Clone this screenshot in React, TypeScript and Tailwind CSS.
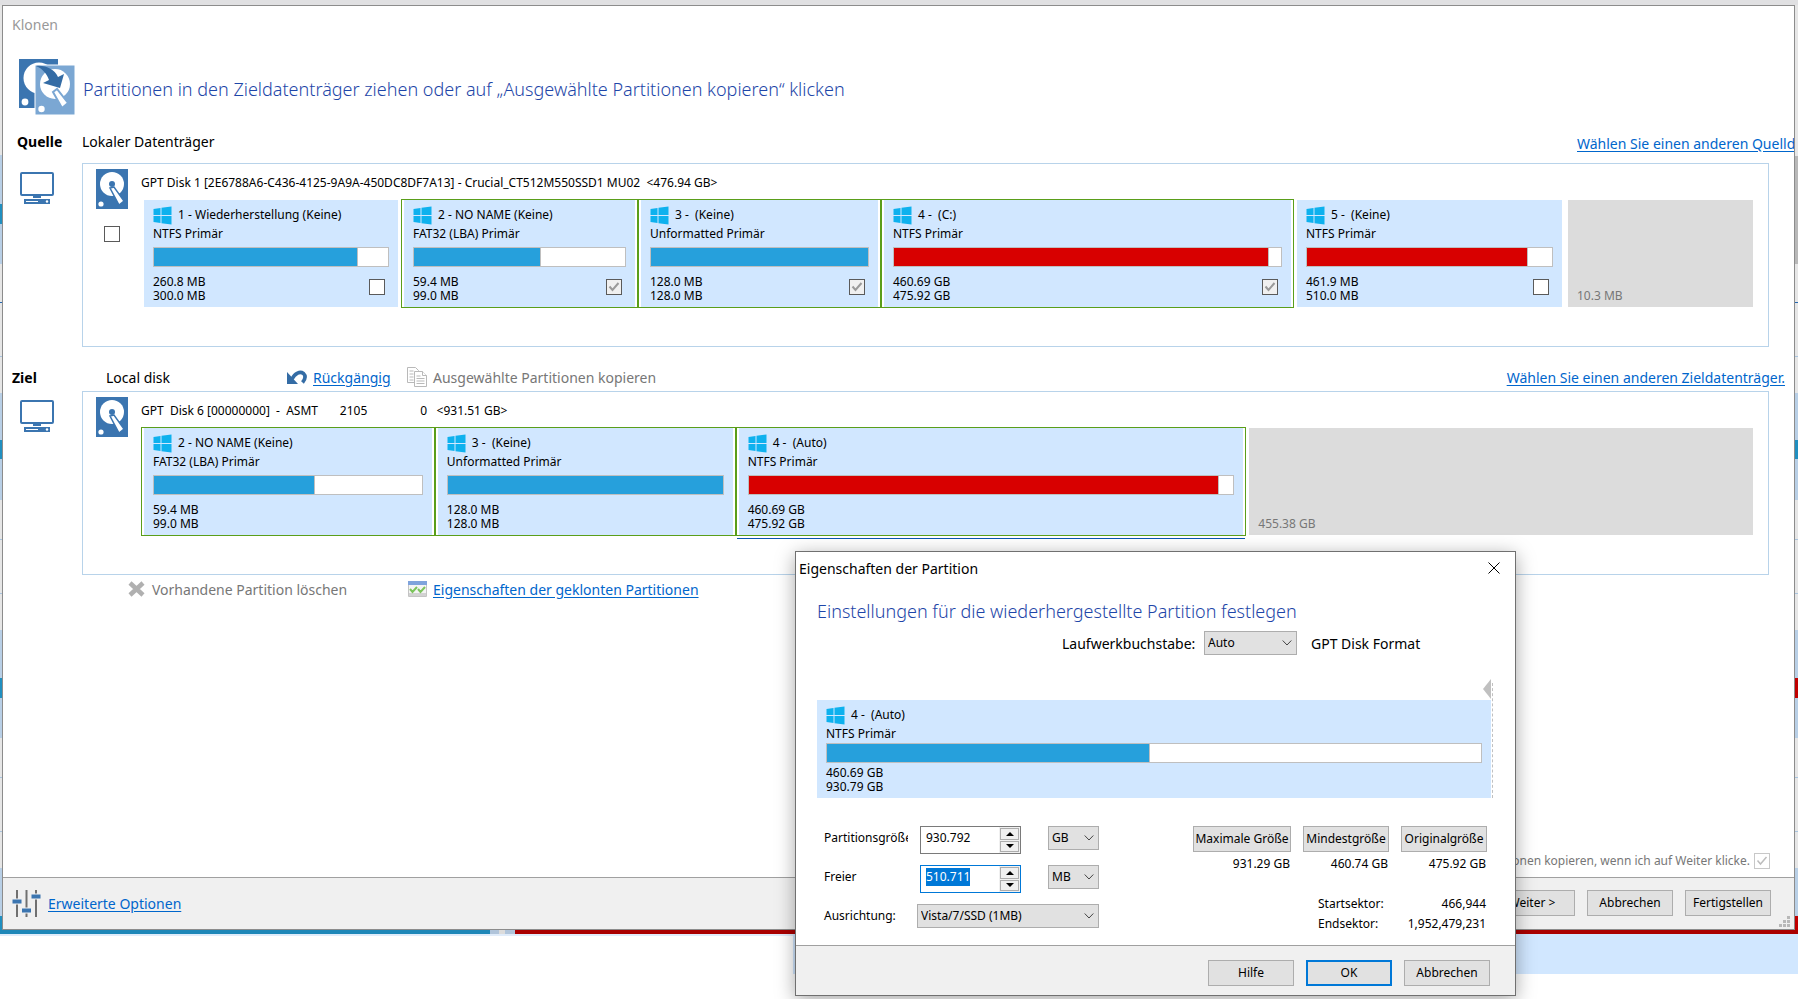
import { useEffect, useRef } from 'react';
import type { ReactNode } from 'react';
import clsx from 'clsx';

interface Partition {
  checkbox?: 'open' | 'locked';
  color?: 'blue' | 'red';
  free?: boolean;
  fs?: string;
  name?: string;
  percent?: number;
  selected?: boolean;
  size: string;
  underline?: boolean;
  used?: string;
  weight: number;
}

const SOURCE_PARTITIONS: Partition[] = [
  { name: '1 - Wiederherstellung (Keine)', fs: 'NTFS Primär', used: '260.8 MB', size: '300.0 MB', percent: 87, color: 'blue', checkbox: 'open', weight: 260 },
  { name: '2 - NO NAME (Keine)', fs: 'FAT32 (LBA) Primär', used: '59.4 MB', size: '99.0 MB', percent: 60, color: 'blue', checkbox: 'locked', selected: true, weight: 237 },
  { name: '3 -  (Keine)', fs: 'Unformatted Primär', used: '128.0 MB', size: '128.0 MB', percent: 100, color: 'blue', checkbox: 'locked', selected: true, weight: 243 },
  { name: '4 -  (C:)', fs: 'NTFS Primär', used: '460.69 GB', size: '475.92 GB', percent: 97, color: 'red', checkbox: 'locked', selected: true, weight: 413 },
  { name: '5 -  (Keine)', fs: 'NTFS Primär', used: '461.9 MB', size: '510.0 MB', percent: 90, color: 'red', checkbox: 'open', weight: 271 },
  { free: true, size: '10.3 MB', weight: 191 },
];

const TARGET_PARTITIONS: Partition[] = [
  { name: '2 - NO NAME (Keine)', fs: 'FAT32 (LBA) Primär', used: '59.4 MB', size: '99.0 MB', percent: 60, color: 'blue', selected: true, weight: 294 },
  { name: '3 -  (Keine)', fs: 'Unformatted Primär', used: '128.0 MB', size: '128.0 MB', percent: 100, color: 'blue', selected: true, weight: 301 },
  { name: '4 -  (Auto)', fs: 'NTFS Primär', used: '460.69 GB', size: '475.92 GB', percent: 97, color: 'red', selected: true, underline: true, weight: 511 },
  { free: true, size: '455.38 GB', weight: 510 },
];

const small = "font-['Noto_Sans','Open_Sans',sans-serif] text-[12px]";

function WindowsIcon() {
  return (
    <svg className="w-[19px] h-[19px] shrink-0" viewBox="0 0 19 19" fill="#0eb1ee">
      <path d="M0.5 3 7.5 2v7H0.5zM8.5 1.8 18.5 0.4V9h-10zM0.5 10h7v7l-7-1zM8.5 10h10v8.6l-10-1.4z" />
    </svg>
  );
}

function DiskIcon() {
  return (
    <svg className="w-8 h-10" viewBox="0 0 32 40">
      <path d="M0 0h32v40H0z" fill="#3b75b0" />
      <circle cx="16" cy="15" r="12" fill="#fff" />
      <circle cx="16" cy="15" r="3" fill="#3b75b0" />
      <path d="m14 19 4-1 10 14-5 4z" fill="#fff" stroke="#3b75b0" strokeWidth="1.5" />
      <circle cx="5" cy="35" r="2.6" fill="#fff" />
    </svg>
  );
}

function CloneIcon() {
  return (
    <svg className="w-14 h-14" viewBox="0 0 56 56">
      <path d="M0 0h39v49H0z" fill="#3b75b0" />
      <circle cx="20" cy="19" r="15.5" fill="#fff" />
      <circle cx="6" cy="43" r="3.4" fill="#fff" />
      <path d="M16 6h40v50H16z" fill="#7ba7d3" stroke="#fff" strokeWidth="1" />
      <circle cx="36" cy="25" r="15" fill="#fff" />
      <path d="m34 33 4-3 11 14-6 5z" fill="#fff" stroke="#7ba7d3" strokeWidth="2" />
      <circle cx="22.5" cy="50" r="3.2" fill="#fff" />
      <path d="M17 7c10-1 18 3 22 11l6-3-4 14-17-5 6-3c-2-6-6-11-13-14z" fill="#346ca5" />
    </svg>
  );
}

function MonitorIcon() {
  return (
    <svg className="w-[34px] h-8" viewBox="0 0 34 32">
      <rect x="1" y="1" width="32" height="22" rx="1" fill="#fff" stroke="#3b75b0" strokeWidth="2" />
      <path d="M13 24h8v2h-8z" fill="#3b75b0" />
      <path d="M4 27h26v5H4z" fill="#3b75b0" />
      <path d="M6 29.5h12" stroke="#fff" />
      <circle cx="27" cy="29.5" r="1.2" fill="#fff" />
    </svg>
  );
}

function UndoIcon() {
  return (
    <svg className="w-5 h-[18px]" viewBox="0 0 20 18" fill="none">
      <path d="M5 11C8 5 13 3 16.500 5.500c2.500 2.500 1.500 6-1 9" stroke="#346ca5" strokeWidth="3.600" />
      <path d="M0 4v12h11z" fill="#346ca5" />
    </svg>
  );
}

function CopyIcon() {
  return (
    <svg className="w-5 h-5" viewBox="0 0 20 20" fill="#fff" stroke="#b9b9b9">
      <path d="M.5.5h8l3 3v12H.5z" />
      <path d="M2.5 4h4m-4 3h4m-4 3h4m-4 3h4" />
      <path d="M7.5 4.5h8l4 4v11h-12z" />
      <path d="M15.5 4.5v4h4M9.5 9h4m-4 2.5h8m-8 2.5h8m-8 2.5h8" />
    </svg>
  );
}

function DeleteIcon() {
  return (
    <svg className="w-[17px] h-4" viewBox="0 0 17 16">
      <path d="m2 2 13 12M15 2 2 14" stroke="#b0b0b0" strokeWidth="4.5" />
    </svg>
  );
}

function PropertiesIcon() {
  return (
    <svg className="w-[19px] h-4" viewBox="0 0 19 16">
      <path d="M.5.5h18v15H.5z" fill="#f4f4f4" stroke="#c4c4c4" />
      <path d="M0 0h19v4H0z" fill="#7fa3dc" />
      <path d="M1 12h17v3H1z" fill="#d2d2d2" />
      <path d="m2 8 2.5 3L9 6m1 2 2.5 3L17 6" fill="none" stroke="#7cc45c" strokeWidth="2" />
    </svg>
  );
}

function SlidersIcon() {
  return (
    <svg className="w-[29px] h-[27px]" viewBox="0 0 29 27">
      <path d="M5 0v27M14.5 0v27M24 0v27" stroke="#707070" strokeWidth="2" />
      <path d="M0 9h10v5H0zM9.5 18h10v5h-10zM19 4h10v5H19z" fill="#3b75b0" stroke="#efefef" />
    </svg>
  );
}

function Check({ id, label, locked, faint }: { id: string; label?: string; locked?: boolean; faint?: boolean }) {
  return (
    <span className="relative block w-4 h-4 shrink-0">
      <input
        aria-label={label}
        className={clsx(
          'block appearance-none w-4 h-4 border',
          faint ? 'border-[#c8c8c8] bg-white' : 'border-[#5a5a5a]',
          !faint && (locked ? 'bg-[#f0f0f0]' : 'bg-white'),
        )}
        defaultChecked={locked}
        disabled={locked}
        id={id}
        type="checkbox"
      />
      {locked && (
        <svg className="absolute inset-0 w-4 h-4 pointer-events-none" viewBox="0 0 16 16" fill="none">
          <path d="m3.5 7.5 3 3.5 6-7" stroke={faint ? '#bdbdbd' : '#9a9a9a'} strokeWidth={faint ? 1.5 : 2} />
        </svg>
      )}
    </span>
  );
}

function UsageBar({ percent, color }: { percent: number; color: 'blue' | 'red' }) {
  return (
    <div className="h-5 bg-white border border-[#bfbfbf]">
      <div
        className={clsx('h-full', color === 'red' ? 'bg-[#d80000]' : 'bg-[#26a0dc]', percent < 100 && 'border-r border-[#bfbfbf]')}
        style={{ width: `${percent}%` }}
      />
    </div>
  );
}

function PartitionTitle({ name, fs }: { name?: string; fs?: string }) {
  return (
    <>
      <div className="flex items-center gap-1.5 h-[19px] whitespace-pre">
        <WindowsIcon />
        <span className="pb-0.5">{name}</span>
      </div>
      <div className="leading-[18px]">{fs}</div>
    </>
  );
}

function PartitionCell({ partition, id }: { partition: Partition; id: string }) {
  const p = partition;
  return (
    <div className={clsx('relative h-[109px] border px-0.5', p.selected ? 'border-[#5a9e1a]' : 'border-transparent')}>
      {p.free ? (
        <div className="flex h-full items-end bg-[#dcdcdc] px-[9px] pb-1 leading-[14px] text-[#777]">{p.size}</div>
      ) : (
        <div className="h-full bg-[#d1e7ff] px-[9px] pt-1.5">
          <PartitionTitle name={p.name} fs={p.fs} />
          <div className="mt-1">
            <UsageBar percent={p.percent ?? 0} color={p.color ?? 'blue'} />
          </div>
          <div className="mt-2 flex items-start justify-between pr-1 leading-[14px]">
            <div>
              <div>{p.used}</div>
              <div>{p.size}</div>
            </div>
            {p.checkbox && (
              <div className="pt-1">
                <Check id={id} label={p.name} locked={p.checkbox === 'locked'} />
              </div>
            )}
          </div>
        </div>
      )}
      {p.underline && <div className="absolute -bottom-1 left-0 right-0 h-px bg-[#0a54b0]" />}
    </div>
  );
}

function DiskPanel({ id, title, partitions, selectable }: { id: string; title: string; partitions: Partition[]; selectable?: boolean }) {
  const columns = partitions.map((p) => `minmax(0, ${p.weight}fr)`).join(' ');

  return (
    <div className="flex">
      <div className="w-[79px] shrink-0 pl-[17px] pt-[9px]">
        <MonitorIcon />
      </div>
      <div className={clsx('mr-[25px] flex h-[184px] min-w-0 flex-1 border border-[#b8d3ea] pl-[13px] pr-3', small)}>
        <div className="flex w-8 shrink-0 flex-col items-center gap-[17px] pt-[5px]">
          <DiskIcon />
          {selectable && <Check id={`${id}-all`} label={title} />}
        </div>
        <div className="ml-[13px] min-w-0 flex-1">
          <div className="flex h-[35px] items-center pt-0.5 whitespace-pre">{title}</div>
          <div className="grid" style={{ gridTemplateColumns: columns }}>
            {partitions.map((p, i) => (
              <PartitionCell key={p.size + i} id={`${id}-${i}`} partition={p} />
            ))}
          </div>
        </div>
      </div>
    </div>
  );
}

function Link({ children }: { children: ReactNode }) {
  return (
    <a className="whitespace-nowrap text-[#0066cc] underline underline-offset-2" href="#">
      {children}
    </a>
  );
}

function PushButton({ children, primary, fit }: { children: ReactNode; primary?: boolean; fit?: boolean }) {
  return (
    <button
      className={clsx(
        'h-[26px] bg-[#e1e1e1] whitespace-nowrap text-black',
        small,
        fit ? 'w-[98px]' : 'w-[86px]',
        primary ? 'border-2 border-[#0078d7]' : 'border border-[#adadad]',
      )}
      type="button"
    >
      {children}
    </button>
  );
}

function Select({ id, value, label, className }: { id: string; value: string; label?: string; className: string }) {
  return (
    <span className={clsx('relative block h-6', className)}>
      <select
        aria-label={label}
        className={clsx('block h-full w-full appearance-none border border-[#adadad] bg-[#e1e1e1] pl-[3px] text-black', small)}
        id={id}
        defaultValue={value}
      >
        <option>{value}</option>
      </select>
      <svg className="pointer-events-none absolute right-[5px] top-2 h-2 w-[10px]" viewBox="0 0 10 8" fill="none">
        <path d="m.7 1.5 4.3 4.5 4.3-4.5" stroke="#444" />
      </svg>
    </span>
  );
}

function SpinBox({ id, value, focused }: { id: string; value: string; focused?: boolean }) {
  const ref = useRef<HTMLInputElement>(null);

  useEffect(() => {
    if (!focused) return;
    ref.current?.focus();
    ref.current?.select();
  }, [focused]);

  return (
    <span className={clsx('flex h-7 w-[101px] border bg-white', focused ? 'border-[#0078d7]' : 'border-[#7a7a7a]')}>
      <input
        ref={ref}
        className={clsx('min-w-0 flex-1 pl-[5px] pb-1 outline-none selection:bg-[#0078d7] selection:text-white', small)}
        defaultValue={value}
        id={id}
        type="text"
      />
      <span className="flex w-[21px] flex-col gap-px bg-[#f0f0f0] p-px">
        <button aria-label="Erhöhen" className="flex flex-1 items-center justify-center border border-[#adadad] bg-[#f0f0f0]" type="button">
          <svg className="h-1 w-2" viewBox="0 0 8 4"><path d="m0 4 4-4 4 4z" /></svg>
        </button>
        <button aria-label="Verringern" className="flex flex-1 items-center justify-center border border-[#adadad] bg-[#f0f0f0]" type="button">
          <svg className="h-1 w-2" viewBox="0 0 8 4"><path d="m0 0 4 4 4-4z" /></svg>
        </button>
      </span>
    </span>
  );
}

function SizePreset({ label, value, fit }: { label: string; value: string; fit?: boolean }) {
  return (
    <div className="text-right">
      <PushButton fit={fit}>{label}</PushButton>
      <div className="mt-1 pr-px leading-4">{value}</div>
    </div>
  );
}

function PartitionDialog() {
  return (
    <div
      aria-label="Eigenschaften der Partition"
      className="absolute left-[795px] top-[551px] flex h-[445px] w-[721px] flex-col border border-[#707070] bg-white shadow-[0_4px_18px_rgba(0,0,0,0.35)]"
      role="dialog"
    >
      <div className="flex h-8 items-center justify-between pl-[3px] pr-[15px]">
        <span className="text-[14px]">Eigenschaften der Partition</span>
        <button aria-label="Schließen" className="h-3 w-3" type="button">
          <svg className="h-3 w-3" viewBox="0 0 12 12"><path d="m.5.5 11 11m0-11-11 11" stroke="#000" /></svg>
        </button>
      </div>
      <h2 className="mt-[11px] pl-[21px] text-[18px] leading-8 font-light text-[#1e46a8]">
        Einstellungen für die wiederhergestellte Partition festlegen
      </h2>
      <div className="mt-1 flex h-6 items-center pl-[266px] text-[14px]">
        <label className="w-[142px] whitespace-nowrap" htmlFor="drive-letter">Laufwerkbuchstabe:</label>
        <Select className="w-[93px]" id="drive-letter" value="Auto" />
        <span className="ml-3.5">GPT Disk Format</span>
      </div>
      <div className={clsx('mt-6 flex pl-[21px] pr-[22px]', small)}>
        <div className="flex-1">
          <svg className="ml-auto block h-[21px] w-2" viewBox="0 0 8 21"><path d="M8 0v20L0 10z" fill="#c0c0c0" /></svg>
          <div className="h-[98px] bg-[#d1e7ff] px-[9px] pt-1.5">
            <PartitionTitle name="4 -  (Auto)" fs="NTFS Primär" />
            <UsageBar percent={49.4} color="blue" />
            <div className="mt-[3px] leading-[14px]">460.69 GB</div>
            <div className="leading-[14px]">930.79 GB</div>
          </div>
        </div>
        <div className="ml-px mt-1 border-l border-dashed border-[#c0c0c0]" />
      </div>
      <div className={clsx('flex flex-1 justify-between px-7 pt-7', small)}>
        <div className="grid auto-rows-min grid-cols-[84px_140px_51px] items-center gap-y-[11px]">
          <label className="overflow-hidden whitespace-nowrap pb-1" htmlFor="partition-size">Partitionsgröße</label>
          <div className="pl-3"><SpinBox id="partition-size" value="930.792" /></div>
          <Select className="w-[51px] self-start" id="size-unit" label="Einheit der Größe" value="GB" />
          <label className="pb-1" htmlFor="free-space">Freier</label>
          <div className="pl-3"><SpinBox focused id="free-space" value="510.711" /></div>
          <Select className="w-[51px] self-start" id="free-unit" label="Einheit des freien Speichers" value="MB" />
          <label htmlFor="alignment">Ausrichtung:</label>
          <div className="col-span-2 pl-[9px]"><Select className="w-full" id="alignment" value="Vista/7/SSD (1MB)" /></div>
        </div>
        <div>
          <div className="flex gap-3">
            <SizePreset fit label="Maximale Größe" value="931.29 GB" />
            <SizePreset label="Mindestgröße" value="460.74 GB" />
            <SizePreset label="Originalgröße" value="475.92 GB" />
          </div>
          <dl className="ml-auto mt-[22px] grid w-[169px] grid-cols-[auto_auto] justify-between pr-px leading-5">
            <dt>Startsektor:</dt>
            <dd className="text-right">466,944</dd>
            <dt>Endsektor:</dt>
            <dd className="text-right">1,952,479,231</dd>
          </dl>
        </div>
      </div>
      <div className="flex h-[50px] items-center justify-end gap-3 border-t border-[#a0a0a0] bg-[#f0f0f0] pr-[25px] pt-1">
        <PushButton>Hilfe</PushButton>
        <PushButton primary>OK</PushButton>
        <PushButton>Abbrechen</PushButton>
      </div>
    </div>
  );
}

// Slice of the program window that shows beside the clone wizard
function BackdropEdge({ side }: { side: 'left' | 'right' }) {
  const left = side === 'left';
  return (
    <div className={clsx('flex shrink-0 flex-col overflow-hidden bg-[#e6e6e6]', left ? 'w-0.5' : 'w-[3px]')}>
      <div className={clsx('h-[151px]', left && 'border-b border-[#b8cfe6]')} />
      <div className={clsx('h-12', left ? 'bg-[#b8cfe6]' : 'bg-[#b8b8b8]')} />
      <div className={clsx('h-5', left ? 'bg-[#208fc0]' : 'bg-[#b8b8b8]')} />
      <div className={clsx('h-10', left ? 'bg-[#b8cfe6]' : 'bg-[#b8b8b8]')} />
      <div className="h-[39px] border-b border-[#2668b0]" />
      <div className="h-[54px] border-b border-[#a9c4de]" />
      <div className="mt-9 h-[47px] bg-[#b8cfe6]" />
      <div className="h-[19px] bg-[#208fc0]" />
      <div className="h-[41px] bg-[#b8cfe6]" />
      <div className="h-10 border-b border-[#a9c4de]" />
      <div className="h-[54px] border-b border-[#a9c4de]" />
      <div className="mt-9 h-12 bg-[#b8cfe6]" />
      <div className={clsx('h-5', left ? 'bg-[#208fc0]' : 'bg-[#c00000]')} />
      <div className="h-10 bg-[#b8cfe6]" />
      <div className="h-10 border-b border-[#a9c4de]" />
      <div className="h-[54px] border-b border-[#a9c4de]" />
      <div className="mt-9 h-12 bg-[#b8cfe6]" />
      <div className={clsx('flex-1', left ? 'bg-[#208fc0]' : 'bg-[#c00000]')} />
    </div>
  );
}

export default function App() {
  return (
    <div className="relative flex min-h-screen flex-col overflow-hidden bg-white font-['Noto_Sans','Open_Sans',sans-serif] text-[14px] text-black">
      <div className="h-[5px] bg-[#e0e0e2]" />
      <div className="flex flex-1">
        <BackdropEdge side="left" />
        <main className="flex min-w-0 flex-1 flex-col overflow-hidden border border-[#8c8c8c] bg-white">
          <div className="flex h-[38px] items-center pb-0.5 pl-[9px] text-[#999]">Klonen</div>
          <div className="mt-[15px] flex items-center gap-2 pl-4">
            <CloneIcon />
            <h1 className="pt-1 text-[18px] font-light text-[#1e46a8]">
              Partitionen in den Zieldatenträger ziehen oder auf „Ausgewählte Partitionen kopieren“ klicken
            </h1>
          </div>

          <div className="mt-1.5 flex h-[42px] items-center pb-0.5">
            <span className="w-[79px] pl-3.5 font-bold">Quelle</span>
            <span>Lokaler Datenträger</span>
            <span className="ml-auto w-[217px] overflow-hidden pt-1">
              <Link>Wählen Sie einen anderen Quelldatenträger.</Link>
            </span>
          </div>
          <DiskPanel
            id="source"
            partitions={SOURCE_PARTITIONS}
            selectable
            title="GPT Disk 1 [2E6788A6-C436-4125-9A9A-450DC8DF7A13] - Crucial_CT512M550SSD1 MU02  <476.94 GB>"
          />

          <div className="mt-[18px] flex h-[26px] items-center pb-0.5">
            <span className="w-[103px] pl-[9px] font-bold">Ziel</span>
            <span className="w-[181px]">Local disk</span>
            <span className="flex w-[120px] items-center gap-1.5">
              <UndoIcon />
              <Link>Rückgängig</Link>
            </span>
            <button className="flex items-center gap-1.5 text-[#777]" disabled type="button">
              <CopyIcon />
              Ausgewählte Partitionen kopieren
            </button>
            <span className="ml-auto pr-[9px]">
              <Link>Wählen Sie einen anderen Zieldatenträger.</Link>
            </span>
          </div>
          <DiskPanel
            id="target"
            partitions={TARGET_PARTITIONS}
            title="GPT  Disk 6 [00000000]  -  ASMT       2105                 0   <931.51 GB>"
          />
          <div className="flex h-[28px] items-center pl-[125px]">
            <button className="flex w-[280px] items-center gap-[7px] text-[#777]" disabled type="button">
              <DeleteIcon />
              Vorhandene Partition löschen
            </button>
            <span className="flex items-center gap-1.5">
              <PropertiesIcon />
              <Link>Eigenschaften der geklonten Partitionen</Link>
            </span>
          </div>

          <div className={clsx('mb-1 mt-auto flex h-6 items-center justify-end gap-1 pr-6 text-[#777]', small)}>
            <label htmlFor="copy-on-next">Ausgewählte Partitionen kopieren, wenn ich auf Weiter klicke.</label>
            <Check faint id="copy-on-next" locked />
          </div>
          <div className="relative flex h-[52px] items-center border-t border-[#a0a0a0] bg-[#f0f0f0] pb-px pl-[9px] pr-[23px]">
            <SlidersIcon />
            <span className="ml-[7px]">
              <Link>Erweiterte Optionen</Link>
            </span>
            <div className="ml-auto flex gap-3">
              <PushButton>Weiter &gt;</PushButton>
              <PushButton>Abbrechen</PushButton>
              <PushButton>Fertigstellen</PushButton>
            </div>
            <svg className="absolute bottom-0.5 right-1 h-3 w-3" viewBox="0 0 12 12" fill="#b8b8b8">
              <path d="M9 1h3v3H9zM5 5h3v3H5zM9 5h3v3H9zM1 9h3v3H1zM5 9h3v3H5zM9 9h3v3H9z" />
            </svg>
          </div>
        </main>
        <BackdropEdge side="right" />
      </div>
      <div className="flex h-1">
        <div className="w-[490px] bg-[#1e87b8]" />
        <div className="w-[9px] bg-[#b0c4da]" />
        <div className="w-1.5 bg-[#dcdcdc]" />
        <div className="w-[10px] bg-[#b0c4da]" />
        <div className="flex-1 bg-[#aa0000]" />
      </div>
      <div className="flex h-10">
        <div className="w-[793px] border-t-2 border-[#e0ecfa]" />
        <div className="flex-1 bg-[#d1e7ff]" />
      </div>
      <div className="h-[25px]" />
      <PartitionDialog />
    </div>
  );
}
